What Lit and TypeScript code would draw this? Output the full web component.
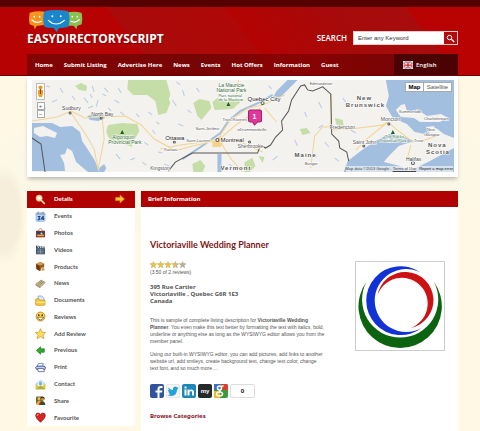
import { LitElement, html, css, svg } from "lit";
import { customElement, property } from "lit/decorators.js";

const NAV = ["Home", "Submit Listing", "Advertise Here", "News", "Events", "Hot Offers", "Information", "Guest"];

const ICONS: Record<string, unknown> = {
  Details: svg`<circle cx="12" cy="12" r="9" fill="#f6e3b8" stroke="#e8b27a" stroke-width="2"/><circle cx="12" cy="12" r="4" fill="#fff"/><path d="M19 19l8 8" stroke="#f0d9a0" stroke-width="5" stroke-linecap="round"/>`,
  Events: svg`<rect x="3" y="5" width="26" height="25" rx="3" fill="#bcd8f5" stroke="#7fabdf" stroke-width="2"/><path d="M3 9h26" stroke="#6c9bd8" stroke-width="3"/><path d="M9 2v7M23 2v7" stroke="#b08a4c" stroke-width="3"/><path d="M8 16h6l-3 4q4 1 2 4-2 3-6 1M24 14v12M24 15l-6 8h9" fill="none" stroke="#1d3f8c" stroke-width="3"/>`,
  Photos: svg`<path d="M8 12l8-9 8 9" fill="none" stroke="#777" stroke-width="2"/><rect x="3" y="11" width="26" height="19" fill="#8c2f1c"/><rect x="6" y="14" width="20" height="13" fill="#2b3a85"/><path d="M6 22h20v5H6z" fill="#f0a42c"/><circle cx="19" cy="19" r="3" fill="#ffd65c"/>`,
  Videos: svg`<path d="M3 4l25 4v5L3 12z" fill="#3c4a58"/><path d="M7 5l4 6M14 6l4 6M21 7l4 6" stroke="#dde3ea" stroke-width="3"/><rect x="3" y="12" width="26" height="18" fill="#43566a"/><path d="M6 17h20M6 22h20M6 26h20M16 14v14" stroke="#9fb1c4" stroke-width="1.5"/>`,
  Products: svg`<path d="M3 9l12-6 12 5-1 14-12 7L4 23z" fill="#9a5a1e"/><path d="M3 9l11 5 13-6-12-5z" fill="#d69a4c"/><path d="M14 14v15L4 23 3 9z" fill="#6e3b10"/><circle cx="23" cy="24" r="6" fill="#e8d2a4"/><path d="M20 24h6M23 21v6" stroke="#a87838" stroke-width="2"/>`,
  News: svg`<path d="M2 18L18 6l12 7-15 14z" fill="#cdb98a" stroke="#8f8260" stroke-width="2"/><path d="M9 18l11-8M13 21l11-9" stroke="#7a7052" stroke-width="2"/><path d="M2 18v4l13 8v-4z" fill="#9c8d62"/>`,
  Documents: svg`<path d="M9 3h11l6 6v14H9z" fill="#d8ecff" stroke="#6b9cd6" stroke-width="2"/><path d="M2 14q0-3 3-3h6l3 4h15v12q0 3-3 3H5q-3 0-3-3z" fill="#f9c736" stroke="#c68d12" stroke-width="2"/><path d="M4 21h24" stroke="#fff0a8" stroke-width="3"/>`,
  Reviews: svg`<circle cx="16" cy="16" r="13" fill="#ffd54d" stroke="#a87412" stroke-width="2"/><circle cx="11" cy="12" r="2.5" fill="#4b3206"/><circle cx="21" cy="12" r="2.5" fill="#4b3206"/><path d="M7 18h18q-3 8-9 8t-9-8z" fill="#fff" stroke="#6b4708" stroke-width="2"/>`,
  "Add Review": svg`<path d="M16 2l4 10 11 1-8 7 3 11-10-6-10 6 3-11-8-7 11-1z" fill="#ffdf5a" stroke="#c89320" stroke-width="2"/>`,
  Previous: svg`<path d="M4 16L16 5v6h11v10H16v6z" fill="#36a82f" stroke="#1b7a1b" stroke-width="2"/>`,
  Print: svg`<path d="M6 13l4-9h14l-2 9z" fill="#fff" stroke="#4a5fa0" stroke-width="2"/><path d="M2 15q2-4 8-3h16q5 1 4 6t-6 5H8q-6-1-6-8z" fill="#c4d1f2" stroke="#2f458e" stroke-width="2.5"/><path d="M7 19h18l2 9H10z" fill="#fff" stroke="#2f458e" stroke-width="2"/>`,
  Contact: svg`<path d="M2 13L16 2l14 11v17H2z" fill="#b7d9ee"/><path d="M8 10h16v12H8z" fill="#eef9ff"/><circle cx="16" cy="14" r="5" fill="#6db2d8"/><path d="M2 14l14 11 14-11v16H2z" fill="#e8c63c"/><path d="M2 30l14-11 14 11z" fill="#a8b23a"/>`,
  Share: svg`<rect x="3" y="4" width="19" height="22" rx="3" fill="#5c6a34"/><circle cx="12" cy="11" r="5" fill="#f0b54a"/><circle cx="22" cy="10" r="6" fill="#33231a"/><circle cx="22" cy="12" r="4" fill="#d98f4e"/><path d="M4 28q1-11 9-11t9 11z" fill="#e5a72e"/><path d="M14 29q1-11 8-11t8 11z" fill="#354c2d"/><path d="M17 20l-5 9" stroke="#b22" stroke-width="3"/>`,
  Favourite: svg`<path d="M16 30Q2 18 2 11q0-8 7-8 5 0 7 5 2-5 7-5 7 0 7 8 0 7-14 19z" fill="#d92420" stroke="#8f100e" stroke-width="2"/><path d="M6 11q0-4 4-4" fill="none" stroke="#ffa8a0" stroke-width="3"/>`,
};

@customElement("side-menu")
class SideMenu extends LitElement {
  @property() active = "Details";
  static styles = css`
    :host { display: block; background: #fff; }
    nav { display: grid; grid-auto-rows: 1fr; min-height: 235px; }
    .item { display: flex; align-items: center; gap: 8px; padding: 0 10px 0 8px; color: #555; text-decoration: none; font: 700 6px/8px Lato, sans-serif; }
    .item.on { background: #b00202; color: #fff; }
    .icon { width: 11px; height: 11px; flex: none; }
    .arrow { width: 10px; height: 10px; margin-left: auto; }
  `;
  render() {
    return html`<nav aria-label="Listing">
      ${Object.entries(ICONS).map(([name, shape]) => html`
        <a class="item ${name === this.active ? "on" : ""}" href="#">
          <svg class="icon" viewBox="0 0 32 32" aria-hidden="true">${shape}</svg>
          <span>${name}</span>
          ${name === this.active
            ? html`<svg class="arrow" viewBox="0 0 32 32"><path d="M2 11h14V3l14 13-14 13v-8H2z" fill="#ffc62e" stroke="#f08a12" stroke-width="2"/></svg>`
            : null}
        </a>`)}
    </nav>`;
  }
}

@customElement("region-map")
class RegionMap extends LitElement {
  static styles = css`
    :host { display: block; position: relative; background: #f3f1ec; }
    .map { display: block; width: 100%; height: 92px; }
    text { font: 5px "Liberation Sans", Arial, sans-serif; fill: #444; stroke: #fff; stroke-width: 1px; paint-order: stroke; }
    .big { font-size: 6px; fill: #222; }
    .small { fill: #555; }
    .tiny { font-size: 4px; fill: #555; }
    .park { font-size: 5px; fill: #2f6b35; }
    .park.tiny { font-size: 4px; }
    .area { font-size: 6px; font-weight: 700; letter-spacing: 1px; fill: #555; }
    .pin { font-size: 7px; font-weight: 700; fill: #fff; stroke: none; }
    .zoom { position: absolute; left: 4px; top: 3px; display: grid; justify-items: center; gap: 2px; }
    .zoom svg { width: 7px; height: 15px; background: #fff; border: 1px solid #bbb; }
    button { font: 6px/7px "Liberation Sans", Arial, sans-serif; color: #555; background: #fff; border: 1px solid #aaa; padding: 0; margin: 0; }
    .zoom button { display: block; width: 8px; height: 8px; line-height: 6px; }
    .types { position: absolute; right: 2px; top: 2px; display: flex; }
    .types button { height: 10px; width: 29px; line-height: 8px; }
    .types .on { width: 18px; font-weight: 700; color: #000; border-right: 0; }
    .credit { position: absolute; right: 1px; bottom: 0; display: flex; gap: 3px; font: 4px/6px "Liberation Sans", Arial, sans-serif; color: #444; background: #f5f5f5aa; }
    .credit a { color: #444; }
    .credit .plain { color: #111; text-decoration: none; }
  `;
  render() {
    return html`
      <svg class="map" viewBox="0 0 421 92" preserveAspectRatio="xMidYMid slice" role="img" aria-label="Map of Quebec">
        <rect width="421" height="92" fill="#f4f2ee"/>
        <g fill="#c5dda6">
          <path d="M96 0h38l4 14-3 11-12-4-8-6-14 0-6-6z"/>
          <path d="M76 45l14-2 15 1 2 7-4 7-4 3 1 6-8-3-11-2-5-5-2-6z"/>
          <path d="M128 9l6 4 4 10-4 10-8 2-3-14z"/>
          <path d="M161 23l6-4 10 2 2 7-5 6-5 6-4-4z"/>
          <path d="M180 22l5-4 10 4 10-5 3 5-8 7-18 1z"/>
          <path d="M43 6l6-3 6 3-1 5-7-1z"/>
          <path d="M160 84l8-4 5 6-3 6h-9zM212 82l8-4 3 8-6 6h-5zM267 49l7-1 4 5-8 2zM302 38l8 2 1 6-7-1zM226 76l6 1-2 6z"/>
        </g>
        <g fill="#a3bfe0">
          <path d="M0 43l20 0 8 4 12-1 8 6 2 9 6 9 7 11 4 11H56l-12-10-4-11-5-3-2 6-5 1 4 8 1 8H0z"/>
          <path d="M55 36l8-2 8 1 2 3-7 3-8-1z"/>
          <path d="M67 88l5-4 2 4-2 4h-5z"/>
          <path d="M353 0h68v58l-10-4-8-6-7 7-14-3-8-8-14-6-7-12 3-10z"/>
          <path d="M311 92l4-11 13-10 13-9 15-8 14 2 11 5-15 5-10 10-5 6 16 4 10 5 20-10 24-13v24z"/>
          <path d="M255 0h10l-9 9-8 8-8 1 4-7z"/>
          <path d="M185 74l4 0 0 18h-4z"/>
        </g>
        <g fill="#f4f2ee">
          <path d="M2 48l9-2 8 4 6 3-2 5-8-2-7 1-6-4z"/><path d="M363 30l5-5 4-1 2 7 14 1 6 4 14-2 7 4-8 4-20 0-6-4-13-1z"/><path d="M393 47l8-1 2 5-6 3z"/>
        </g>
        <path d="M240 15l-12 7-20 9-12 10-8 12-20 14-18 12" fill="none" stroke="#a3bfe0" stroke-width="2"/>
        <g fill="none" stroke="#b7cbe4" stroke-width="1">
          <path d="M8 14l4 3M20 22l5-2M28 8l3 5M52 18l4 5M60 6l2 6M82 20l5 3M88 32l4 3M30 30l6-1M116 32l4 3M120 50l3 4M112 62l4 3M126 72l4 1M140 20l4 6M150 10l2 6M155 30l4 3M146 44l5 2M84 74l4 5M98 80l5-2M196 84l4 2M240 80l5-4M262 60l3 6M272 32l2 5M286 22l3 6M310 18l3 4M318 50l5 3M292 62l4 5M280 74l4 3M66 20l-2 7M72 8l4 4M14 6l4 1M132 84l5 2M56 28l5-2M104 34l3 3M286 48l4-3M10 26l4 3M40 16l3 4M76 28l3 3M144 2l4 3M164 8l3 4M110 82l4 3M124 42l3 2M302 78l4 3M236 6l3 3M70 14l4 2M58 14l2 4M86 8l3 5"/>
        </g>
        <g fill="none" stroke="#f2d391" stroke-width="1">
          <path d="M0 41l25-4 14-6 14 7 16-1 24-1 16 9 13 14 18 10M70 37l2 22-6 30M39 33l15 22 8 14 4 20M128 69l20-4 22-3 16-3 22 3 22 10M186 58l12-18 18-12 14-3 22-10M186 60l16-14 26-18M184 61l-20 4-22 6M188 62l10 16 12 14M298 50l20-1 32-4 5-3 12 10 13 10 12-2 12-4M278 88l4-32 8-9 8 0M298 50l1-36M355 42l-20 16-12 12M374 80l4-15M206 0l-4 28M232 28l12 14"/>
        </g>
        <path d="M180 62l8-6 4 4-4 7-8 0z" fill="#f5d38c"/>
        <path d="M0 58l9 6 4 28M136 91l7-9 17-9h65l3-8 5 3 5-3 5-8 7-7-1-9 7-10 3-11 9-14 4-1 3 5 5 1 10-4 8 7 1 40 7 7 1 7 7 4 2 9" fill="none" stroke="#555" stroke-width="1"/>
        <g fill="#fff" stroke="#555" stroke-width="1"><circle cx="38" cy="33" r="1"/><circle cx="69" cy="38" r="1"/><circle cx="142" cy="62" r="1"/><circle cx="185" cy="60" r="1.5"/><circle cx="230" cy="23" r="1.5"/><circle cx="217" cy="62" r="1"/><circle cx="356" cy="44" r="1"/><circle cx="380" cy="83" r="1.5"/><circle cx="331" cy="66" r="1"/></g>
        <path d="M90 50l2 4h-4zM196 22l2 4h-4zM360 50l2 4h-4z" fill="#1d5c28"/>
        <text x="30" y="30">Sudbury</text><text x="59" y="36">North Bay</text>
        <text class="park" x="80" y="59">Algonquin</text><text class="park" x="76" y="64">Provincial Park</text>
        <text class="park" x="186" y="7">La Mauricie</text><text class="park" x="184" y="12">National Park</text><text class="park tiny" x="186" y="17">Parc national</text><text class="park tiny" x="186" y="21">de la Mauricie</text>
        <text class="big" x="215" y="21">Quebec City</text><text class="tiny" x="190" y="41">Trois-Rivieres</text>
        <text class="tiny" x="163" y="50">Saint-Jérôme</text><text class="tiny" x="205" y="51">oDrummondville</text>
        <text class="big" x="133" y="60">Ottawa</text><text class="tiny" x="154" y="62">Saint-Laurent</text><text class="big" x="188" y="62">Montreal</text>
        <text class="tiny" x="132" y="71">Kanata</text><text class="small" x="205" y="68">Sherbrooke</text><text class="small" x="118" y="90">Kingston</text>
        <text class="area" x="188" y="90">Vermont</text><text class="area" x="262" y="77">Maine</text><text class="tiny" x="272" y="85">Bangor</text>
        <text class="tiny" x="277" y="5">Edmundston</text><text class="area" x="324" y="20">New</text><text class="area" x="313" y="27">Brunswick</text>
        <text class="small" x="297" y="49">Fredericton</text><text class="small" x="348" y="41">Moncton</text><text class="small" x="320" y="64">Saint John</text>
        <text class="tiny" x="366" y="33">Summerside</text><text class="tiny" x="391" y="40">Charlottetown</text><text class="tiny" x="394" y="51">New</text><text class="tiny" x="391" y="56">Glasgow</text><text class="tiny" x="381" y="62">Truro</text>
        <text class="park tiny" x="352" y="58">The Rocks</text><text class="park tiny" x="347" y="62">Provincial Park</text>
        <text class="area" x="395" y="67">Nova</text><text class="area" x="393" y="74">Scotia</text><text x="373" y="81">Halifax</text>
        <path d="M218 30h9q2 0 2 2v8q0 2-2 2h-2l-3 3-2-3h-2q-2 0-2-2v-8q0-2 2-2z" fill="#e0389a" stroke="#a81c6c"/>
        <text class="pin" x="220" y="39">1</text>
      </svg>
      <div class="zoom">
        <svg viewBox="0 0 7 15"><circle cx="3.5" cy="3.5" r="2" fill="#e59a1c"/><path d="M1 6h5v4l-1 3H2l-1-3z" fill="#e8a420"/><path d="M3.500 5v5" stroke="#a33" /></svg>
        <div><button aria-label="Zoom in">+</button><button aria-label="Zoom out">−</button></div>
      </div>
      <div class="types"><button class="on">Map</button><button>Satellite</button></div>
      <div class="credit"><span>Map data ©2013 Google - <a href="#">Terms of Use</a></span><a class="plain" href="#">Report a map error</a></div>
    `;
  }
}

@customElement("app-root")
class AppRoot extends LitElement {
  static styles = css`
    :host { display: block; min-height: 100vh; color: #555; font: 5px/7px "Liberation Sans", Arial, sans-serif;
      background:
        radial-gradient(ellipse 22px 50px at 4px 215px, #f6eedb 70%, #f6eedb00),
        radial-gradient(ellipse 55% 70px at 50% 170px, #f8f7ea 60%, #f8f7ea00),
        #fef8e5; }
    * { box-sizing: border-box; }
    h1, h2, p, address { margin: 0; font-style: normal; }
    .wrap { padding: 0 22px 0 27px; }
    header { border-top: 7px solid #560000; border-bottom: 1px solid #6b0000;
      background: linear-gradient(52deg, #b60202 30%, #a80b0b 30%, #b00808 52%, #b40303 52%, #a60a0a 72%, #a80c0c 86%, #b90202 86%); }
    .top { display: flex; justify-content: space-between; align-items: flex-start; height: 47px; }
    .logo { display: block; color: #fff; text-decoration: none; font: 700 12px/14px "Open Sans", sans-serif; text-shadow: 1px 1px 1px #5008; }
    .logo svg { display: block; width: 57px; height: 22px; margin-top: 3px; }
    .search { display: flex; align-items: center; gap: 6px; margin-top: 24px; color: #fff; font: 600 8px/14px "Open Sans", sans-serif; }
    .box { display: flex; border: 1px solid #ecc; height: 14px; width: 105px; background: #fff; }
    .box input { flex: 1; min-width: 0; border: 0; padding: 0 4px; color: #333; background: #fff; font: 6px/12px "Liberation Sans", Arial, sans-serif; }
    .box input::placeholder { color: #333; opacity: 1; }
    .box button { width: 13px; border: 0; padding: 2px; background: #b30b0b; }
    .box svg { display: block; width: 9px; height: 9px; }
    .nav { display: flex; align-items: center; gap: 11px; height: 21px; padding-left: 8px; background: linear-gradient(90deg, #840404, #760505 40%, #8a0303 60%, #700404); }
    .nav a { color: #fff; text-decoration: none; font: 700 6px/20px "Open Sans", sans-serif; white-space: nowrap; }
    .nav .lang { display: flex; align-items: center; gap: 3px; margin-left: auto; width: 64px; padding-left: 9px; height: 21px; background: #4a0202; font-weight: 600; }
    .lang svg { width: 10px; height: 8px; }
    .card { background: #fff; padding: 4px 4px 5px 5px; box-shadow: 0 3px 4px -1px #0004; }
    .cols { display: grid; grid-template-columns: 108px minmax(0, 1fr); gap: 6px; margin-top: 14px; align-items: start; }
    main { background: #fff; min-height: 240px; }
    .bar { background: #b00202; color: #fff; padding: 0 7px; font: 700 6px/16px "Noto Sans", sans-serif; }
    .body { padding: 31px 13px 8px 9px; }
    h1 { color: #7e1717; font: 700 9px/14px Lato, sans-serif; }
    .row { display: flex; justify-content: space-between; gap: 12px; margin-top: 9px; }
    .text { flex: 1; max-width: 175px; }
    .stars { display: block; width: 36px; height: 7px; }
    .count { margin-top: 1px; }
    address { margin-top: 8px; font: 700 6px/7px "Noto Sans", sans-serif; }
    .desc { margin-top: 12px; }
    .desc + .desc { margin-top: 6px; }
    .pic { flex: none; width: 90px; height: 90px; border: 1px solid #ccc; }
    .share { display: flex; gap: 2px; margin-top: 12px; align-items: center; }
    .share a, .share svg { display: block; width: 14px; height: 14px; }
    .share output { width: 25px; border: 1px solid #ddd; border-radius: 2px; color: #222; text-align: center; font: 700 6px/12px "Noto Sans", sans-serif; }
    h2 { margin-top: 14px; color: #8d1420; font: 700 6px/8px "Noto Sans", sans-serif; }
    text { font: 700 12px "Liberation Sans", Arial, sans-serif; }
  `;

  star(x: number, c: string) {
    return svg`<path transform="translate(${x} 0)" d="M7 1l2 4 5 .5-4 3.500 1.500 5L7 11l-4.500 3L4 9 0 5.500 5 5z" fill="${c}" stroke="#a99a60" stroke-width=".8"/>`;
  }

  render() {
    return html`
      <header>
        <div class="wrap">
          <div class="top">
            <a class="logo" href="#">
              <svg viewBox="0 0 171 66" aria-hidden="true">
                <path d="M8 8q30-8 52 0v34q-18 6-30 5l-7 11-3-11q-8-1-12-4-4-18 0-35z" fill="#f5951f"/>
                <path d="M118 8q25-6 46 1 4 18 0 34-5 3-13 4l-3 11-8-11h-22z" fill="#8cc152"/>
                <path d="M52 4q36-8 72 0 7 22 0 46-12 4-28 4l-7 12-9-12q-16 0-28-4-7-24 0-46z" fill="#1b86cc"/>
                <path d="M64 31q23 22 48 0M15 30q13 12 28 4M132 34q14 6 25-5" fill="none" stroke="#fff" stroke-width="3.500" stroke-linecap="round"/>
                <g fill="#fff"><circle cx="76" cy="19" r="3"/><circle cx="101" cy="19" r="3"/><circle cx="22" cy="20" r="2.500"/><circle cx="38" cy="20" r="2.500"/><circle cx="136" cy="20" r="2.500"/><circle cx="151" cy="20" r="2.500"/></g>
              </svg>
              EASYDIRECTORYSCRIPT
            </a>
            <form class="search" @submit=${(e: Event) => e.preventDefault()}>
              <label for="q">SEARCH</label>
              <div class="box">
                <input id="q" placeholder="Enter any Keyword">
                <button aria-label="Search"><svg viewBox="0 0 18 18"><circle cx="7" cy="7" r="4.500" fill="none" stroke="#fff" stroke-width="2"/><path d="M10.500 10.500l6 5.500" stroke="#fff" stroke-width="2.500"/></svg></button>
              </div>
            </form>
          </div>
          <nav class="nav">
            ${NAV.map((n) => html`<a href="#">${n}</a>`)}
            <a class="lang" href="#">
              <svg viewBox="0 0 20 16"><rect width="20" height="16" fill="#2b3a7c"/><path d="M0 0l20 16M20 0L0 16" stroke="#fff" stroke-width="3"/><path d="M0 0l20 16M20 0L0 16" stroke="#c22" stroke-width="1"/><path d="M10 0v16M0 8h20" stroke="#fff" stroke-width="5"/><path d="M10 0v16M0 8h20" stroke="#c22" stroke-width="2.500"/><rect width="20" height="16" fill="none" stroke="#fff" stroke-width="2"/></svg>
              English
            </a>
          </nav>
        </div>
      </header>
      <div class="wrap">
        <div class="card"><region-map></region-map></div>
        <div class="cols">
          <side-menu></side-menu>
          <main>
            <div class="bar">Brief Information</div>
            <div class="body">
              <h1>Victoriaville Wedding Planner</h1>
              <div class="row">
                <div class="text">
                  <svg class="stars" viewBox="0 0 74 14" role="img" aria-label="3.50 of 5">
                    ${[0, 15, 30].map((x) => this.star(x, "#ecc53a"))}${this.star(45, "#b8b8b8")}${this.star(60, "#b0b0b0")}
                    <path d="M52 1v10l-4.500 3L49 9l-4-3.500 5-.5z" fill="#ecc53a"/>
                  </svg>
                  <p class="count">(3.50 of 2 reviews)</p>
                  <address>395 Rue Cartier<br>Victoriaville , Quebec G6R 1E3<br>Canada</address>
                  <p class="desc">This is sample of complete listing description for <b>Victoriaville Wedding Planner</b>. You even make this text better by formatting the text with italics, bold, underline or anything else as long as the WYSIWYG editor allows you from the member panel.</p>
                  <p class="desc">Using our built-in WYSIWYG editor, you can add pictures, add links to another website url, add smileys, create background text, change text color, change text font, and so much more ...</p>
                </div>
                <svg class="pic" viewBox="75 230 268 268" role="img" aria-label="Victoriaville Wedding Planner logo">
                  <path d="M272 262A105 105 0 1 0 275 431A96 96 0 1 1 272 262z" fill="#1133d6"/>
                  <path d="M140 333A86 86 0 1 1 240 431A78.500 78.500 0 1 0 140 333z" fill="#cc1212"/>
                  <path d="M107 290A127 127 0 1 0 312 290A116 116 0 1 1 107 290z" fill="#0c6410"/>
                </svg>
              </div>
              <div class="share">
                <a href="#" aria-label="Facebook"><svg viewBox="0 0 28 28"><rect width="28" height="28" rx="4" fill="#31549c"/><path d="M15 28V17h-4v-4h4v-3q0-6 6-6h4v4h-3q-3 0-3 3v2h6l-1 4h-5v11z" fill="#fff"/></svg></a>
                <a href="#" aria-label="Twitter"><svg viewBox="0 0 28 28"><rect x=".5" y=".5" width="27" height="27" rx="4" fill="#f6f6f6" stroke="#ccc"/><path d="M5 7q4 5 9 5-1-6 4-7 3 0 4 2l3-1-2 3 2 0-3 3q0 11-11 12-5 0-8-2 4 0 6-2-3 0-4-3h2q-3-2-3-5h2Q4 10 5 7z" fill="#22a3dc"/></svg></a>
                <a href="#" aria-label="LinkedIn"><svg viewBox="0 0 28 28"><rect width="28" height="28" rx="4" fill="#1f86b8"/><path d="M5 11h4v12H5zM5 5h4v4H5zM11 11h4v2q2-3 5-2 4 1 4 5v7h-4v-6q0-3-2-3-3 0-3 3v6h-4z" fill="#fff"/></svg></a>
                <a href="#" aria-label="Myspace"><svg viewBox="0 0 28 28"><rect width="28" height="28" rx="4" fill="#26282b"/><text x="14" y="17" text-anchor="middle" fill="#fff">my</text></svg></a>
                <a href="#" aria-label="Google"><svg viewBox="0 0 28 28"><rect width="28" height="28" rx="4" fill="#3a9a3c"/><path d="M14 0h10q4 0 4 4v8H14z" fill="#d8402c"/><path d="M0 0h12v12H0z" fill="#3d6fd0"/><path d="M0 14h12v14H4q-4 0-4-4z" fill="#f2b51e"/><circle cx="11" cy="8" r="4" fill="none" stroke="#fff" stroke-width="3"/><ellipse cx="11" cy="20" rx="6" ry="4" fill="none" stroke="#fff" stroke-width="3"/><path d="M13 12l-2 4M15 4h4" stroke="#fff" stroke-width="3"/></svg></a>
                <output>0</output>
              </div>
              <h2>Browse Categories</h2>
            </div>
          </main>
        </div>
      </div>
    `;
  }
}
